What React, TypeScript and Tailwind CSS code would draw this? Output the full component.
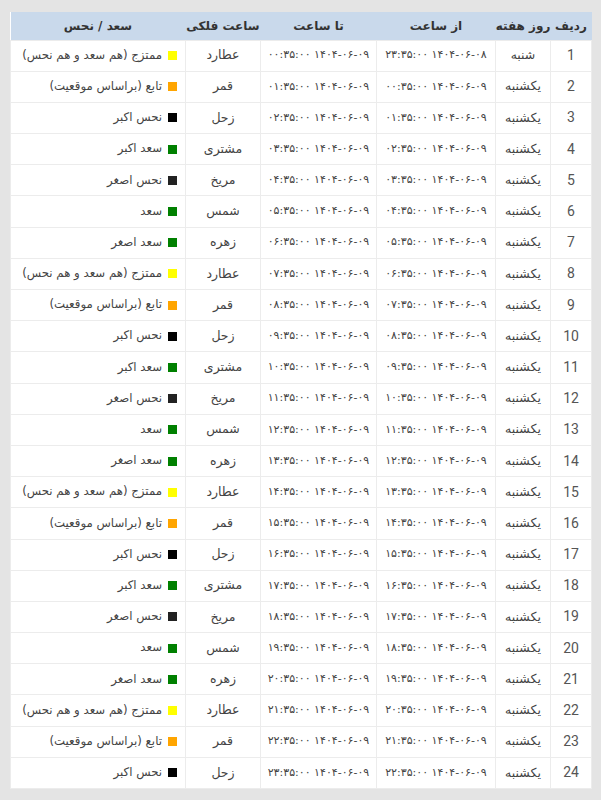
import React from "react"

const fa = (s: string) => s.replace(/[0-9]/g, (d) => "۰۱۲۳۴۵۶۷۸۹"[Number(d)])
const pad = (n: number) => String(n).padStart(2, "0")

const planets = [
  { name: "عطارد", label: "ممتزج (هم سعد و هم نحس)", color: "bg-[#ffff00]" },
  { name: "قمر", label: "تابع (براساس موقعیت)", color: "bg-[#ffa500]" },
  { name: "زحل", label: "نحس اکبر", color: "bg-black" },
  { name: "مشتری", label: "سعد اکبر", color: "bg-[#008000]" },
  { name: "مریخ", label: "نحس اصغر", color: "bg-[#222222]" },
  { name: "شمس", label: "سعد", color: "bg-[#008000]" },
  { name: "زهره", label: "سعد اصغر", color: "bg-[#008000]" },
]

const rows = Array.from({ length: 24 }, (_, i) => {
  const n = i + 1
  const fromH = n === 1 ? 23 : n - 2
  const fromDay = n === 1 ? "08" : "09"
  const toH = n - 1
  return {
    n,
    day: n === 1 ? "شنبه" : "یکشنبه",
    from: fa(`1404-06-${fromDay} ${pad(fromH)}:35:00`),
    to: fa(`1404-06-09 ${pad(toH)}:35:00`),
    planet: planets[i % 7],
  }
})

export default function App() {
  return (
    <div
      className="min-h-[800px] w-[601px] bg-[#e4e4e4] px-[10px] pt-[12px]"
      style={{ fontFamily: "'DejaVu Sans', Roboto, sans-serif" }}
    >
      <table dir="rtl" className="w-[581px] table-fixed border-collapse bg-white text-[12.5px] text-[#444]">
        <colgroup>
          <col className="w-[41px]" />
          <col className="w-[55px]" />
          <col className="w-[119px]" />
          <col className="w-[116px]" />
          <col className="w-[75px]" />
          <col className="w-[175px]" />
        </colgroup>
        <thead>
          <tr className="h-[28px] whitespace-nowrap bg-[#c9d9eb] text-[12px] text-[#333]">
            <th className="font-bold">ردیف</th>
            <th className="font-bold">روز هفته</th>
            <th className="font-bold">از ساعت</th>
            <th className="font-bold">تا ساعت</th>
            <th className="font-bold">ساعت فلکی</th>
            <th className="font-bold">سعد / نحس</th>
          </tr>
        </thead>
        <tbody>
          {rows.map((r) => (
            <tr key={r.n} className="h-[31.2px]">
              <td className="border border-[#ececec] text-center text-[14px] text-[#555]" style={{ fontFamily: "Roboto, sans-serif" }}>
                {r.n}
              </td>
              <td className="border border-[#ececec] text-center">{r.day}</td>
              <td className="border border-[#ececec] text-center text-[11px] tracking-[0.3px]">{r.from}</td>
              <td className="border border-[#ececec] text-center text-[11px] tracking-[0.3px]">{r.to}</td>
              <td className="border border-[#ececec] text-center">{r.planet.name}</td>
              <td className="border border-[#ececec] pr-[8px] text-[11.75px]">
                <div className="flex items-center gap-[6px]">
                  <span className={`inline-block size-[9px] ${r.planet.color}`} />
                  <span>{r.planet.label}</span>
                </div>
              </td>
            </tr>
          ))}
        </tbody>
      </table>
    </div>
  )
}
